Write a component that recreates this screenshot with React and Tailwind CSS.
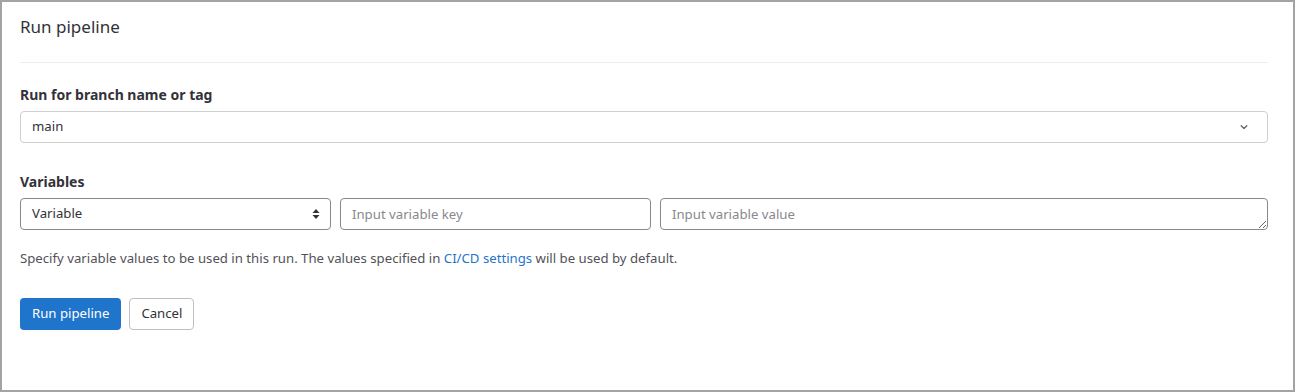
export default function App() {
  const font = { fontFamily: '"Noto Sans", "Open Sans", sans-serif' };
  return (
    <div
      className="h-[392px] w-[1295px] border-2 border-[#a3a3a3] bg-white pl-[18px] pr-[25px] pt-[13px] text-[13.2px] text-[#333238]"
      style={font}
    >
      <h1 className="text-[17px] leading-[24px] text-[#333238]">Run pipeline</h1>
      <div className="mt-[23px] h-px bg-[#ececec]" />

      <div className="mt-[22px] text-[14px] font-bold leading-[20px]">Run for branch name or tag</div>
      <div className="mt-[6px] flex h-[32px] items-center justify-between rounded-[4px] border border-[#cfcfcf] pl-[11px] pr-[18px]">
        <span>main</span>
        <svg width="10" height="10" viewBox="0 0 16 16" className="text-[#626168]">
          <path d="M3.5 6l4.5 4.5L12.5 6" fill="none" stroke="currentColor" strokeWidth="2" strokeLinecap="round" strokeLinejoin="round" />
        </svg>
      </div>

      <div className="mt-[29px] text-[14px] font-bold leading-[20px]">Variables</div>
      <div className="mt-[6px] flex gap-[9px]">
        <div className="flex h-[32px] w-[311px] items-center justify-between rounded-[4px] border border-[#89888d] pl-[11px] pr-[10px]">
          <span>Variable</span>
          <svg width="8" height="12" viewBox="0 0 8 12" className="text-[#333238]">
            <path d="M4 1L7.5 5H0.5Z M4 11L7.5 7H0.5Z" fill="currentColor" />
          </svg>
        </div>
        <input
          className="h-[32px] w-[311px] rounded-[4px] border border-[#89888d] px-[11px] text-[13.2px] text-[#333238] outline-none placeholder:text-[#89888d]"
          placeholder="Input variable key"
          style={font}
        />
        <textarea
          className="block h-[32px] min-w-0 flex-1 rounded-[4px] border border-[#89888d] px-[11px] py-[5px] text-[13.2px] leading-[20px] text-[#333238] outline-none placeholder:text-[#89888d]"
          placeholder="Input variable value"
          style={font}
        />
      </div>

      <p className="mt-[18px] leading-[20px] text-[#535158]">
        Specify variable values to be used in this run. The values specified in{" "}
        <span className="text-[#1f75cb]">CI/CD settings</span> will be used by default.
      </p>

      <div className="mt-[30px] flex gap-[8px]">
        <button className="h-[32px] rounded-[4px] bg-[#1f75cb] px-[12px] text-[13.2px] text-white" style={font}>
          Run pipeline
        </button>
        <button className="h-[32px] rounded-[4px] border border-[#bfbfc3] bg-white px-[11px] text-[13.2px] text-[#333238]" style={font}>
          Cancel
        </button>
      </div>
    </div>
  );
}
